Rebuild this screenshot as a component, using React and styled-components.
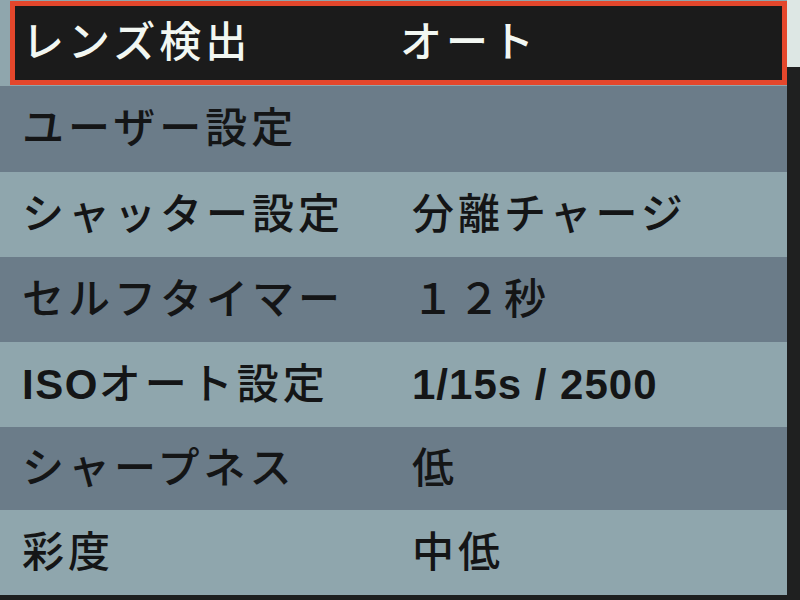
import React from "react";
import styled, { createGlobalStyle } from "styled-components";

const Global = createGlobalStyle`
  html, body { margin: 0; padding: 0; background: #1e1f1f; }
  body { width: 800px; height: 600px; overflow: hidden; }
`;

const Screen = styled.div`
  width: 800px;
  height: 600px;
  display: flex;
  background: #1e1f1f;
  font-family: "Liberation Sans", "Noto Sans CJK JP", sans-serif;
`;

const List = styled.div`
  width: 787px;
  height: 595px;
  display: flex;
  flex-direction: column;
  background: #8fa6ad;
`;

const Row = styled.div`
  height: ${(p) => p.$h || 85}px;
  box-sizing: border-box;
  display: grid;
  grid-template-columns: 390px 1fr;
  align-items: center;
  padding-left: 22px;
  background: ${(p) => (p.$dark ? "#6b7c89" : "#8fa6ad")};
  color: #141516;
`;

const SelectedRow = styled.div`
  height: 84px;
  margin: 1px 0 1px 10px;
  box-sizing: border-box;
  display: grid;
  grid-template-columns: 378px 1fr;
  align-items: center;
  padding-left: 7px;
  background: #1b1b1b;
  border: 5px solid #e4472c;
  color: #f2f7f2;
`;

const Text = styled.span`
  font-size: 42px;
  font-weight: 500;
  letter-spacing: 4px;
  line-height: 1;
  white-space: nowrap;
`;

const Latin = styled.span`
  font-weight: 700;
  letter-spacing: ${(p) => (p.$tight ? 1 : 1.5)}px;
`;

const Scrollbar = styled.div`
  width: 13px;
  height: 600px;
  display: flex;
  flex-direction: column;
  background: #1f2020;
`;

const Thumb = styled.div`
  height: 67px;
  background: #dde7e4;
`;

const rows = [
  { key: "user", label: "ユーザー設定", value: "", dark: true, h: 86 },
  { key: "shutter", label: "シャッター設定", value: "分離チャージ", dark: false, h: 85 },
  { key: "timer", label: "セルフタイマー", value: "１２秒", dark: true, h: 85 },
  {
    key: "iso",
    label: (
      <>
        <Latin>ISO</Latin>オート設定
      </>
    ),
    value: <Latin $tight>1/15s / 2500</Latin>,
    dark: false,
    h: 85,
  },
  { key: "sharp", label: "シャープネス", value: "低", dark: true, h: 83 },
  { key: "sat", label: "彩度", value: "中低", dark: false, h: 85 },
];

export default function App() {
  return (
    <>
      <Global />
      <Screen>
        <List>
          <SelectedRow>
            <Text>レンズ検出</Text>
            <Text>オート</Text>
          </SelectedRow>
          {rows.map((r) => (
            <Row key={r.key} $dark={r.dark} $h={r.h}>
              <Text>{r.label}</Text>
              <Text>{r.value}</Text>
            </Row>
          ))}
        </List>
        <Scrollbar>
          <Thumb />
        </Scrollbar>
      </Screen>
    </>
  );
}
